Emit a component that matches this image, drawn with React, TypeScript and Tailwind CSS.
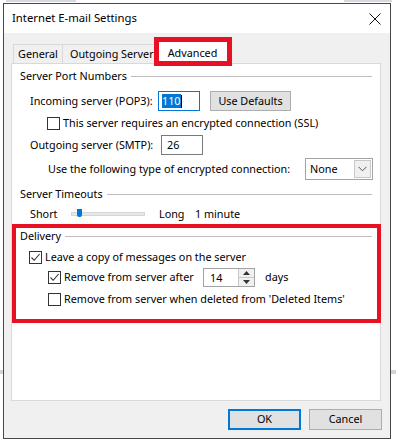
import React from 'react';

// Windows-style "Internet E-mail Settings" dialog, Advanced tab

const Check: React.FC<{ checked?: boolean }> = ({ checked }) => (
  <span className="flex w-[13px] h-[13px] shrink-0 items-center justify-center border border-[#333333] bg-white">
    {checked && (
      <svg width="11" height="11" viewBox="0 0 11 11">
        <path d="M1.5 5.5 L4.2 8.3 L9.6 2" fill="none" stroke="#333333" strokeWidth="1.1" />
      </svg>
    )}
  </span>
);

const GroupHeading: React.FC<{ label: string }> = ({ label }) => (
  <div className="flex h-[16px] items-center pl-[8px] pr-[8px]">
    <span>{label}</span>
    <span className="ml-[4px] h-px flex-1 bg-[#bdbdbd]" />
  </div>
);

const App: React.FC = () => {
  return (
    <div className="relative w-[396px] h-[439px] overflow-hidden bg-white pl-[3px] pt-[3px] font-['Noto_Sans',sans-serif] text-[10.8px] text-black">
      {/* edges of the window behind the dialog */}
      <div className="absolute left-[6px] top-0 h-[2px] w-[70px] bg-[#d8d8e0]" />
      <div className="absolute right-[4px] top-0 h-[2px] w-[48px] bg-[#d8d8e0]" />
      <div className="absolute left-0 top-[370px] h-[4px] w-[3px] bg-[#d4d4d4]" />
      <div className="absolute right-0 top-[370px] h-[4px] w-[5px] bg-[#d4d4d4]" />

      <div className="relative flex h-[436px] w-[388px] flex-col border border-[#474747] bg-[#f0f0f0]">
        {/* title bar */}
        <div className="flex h-[29px] items-center justify-between bg-white pl-[8px] pr-[9px]">
          <span className="text-[11.3px]">Internet E-mail Settings</span>
          <svg width="12" height="12" viewBox="0 0 12 12">
            <path d="M0.5 0.5 L11.5 11.5 M11.5 0.5 L0.5 11.5" stroke="#111111" strokeWidth="1" />
          </svg>
        </div>

        <div className="px-[7px] pt-[7px]">
          {/* tabs */}
          <div className="flex h-[23px] items-end pl-[2px]">
            <div className="flex h-[19px] w-[50px] items-center justify-center border border-b-0 border-[#d9d9d9]">General</div>
            <div className="flex h-[19px] w-[94px] items-center overflow-hidden whitespace-nowrap border-t border-[#d9d9d9] pl-[7px]">Outgoing Server</div>
            <div className="relative z-10 -mb-px flex h-[24px] w-[71px] items-center justify-center border border-b-0 border-[#d9d9d9] bg-white pt-[1px]">
              Advanced
              <span className="absolute left-[-4px] top-[-4px] h-[29px] w-[78px] border-[5px] border-[#e81123]" />
            </div>
          </div>

          {/* tab panel */}
          <div className="relative h-[338px] w-[370px] border border-[#d9d9d9] bg-white">
            <div className="mt-[4px]">
              <GroupHeading label="Server Port Numbers" />
            </div>

            <div className="mt-[7px] flex h-[20px] items-center pl-[18px]">
              <span className="w-[128px]">Incoming server (POP3):</span>
              <div className="flex h-[20px] w-[42px] items-center border border-[#0078d7] pl-[3px]">
                <span className="bg-[#0078d7] leading-[14px] text-white">110</span>
                <span className="h-[13px] w-px bg-black" />
              </div>
              <button className="ml-[10px] h-[20px] w-[81px] border border-[#adadad] bg-[#e1e1e1]">Use Defaults</button>
            </div>

            <div className="mt-[4px] flex h-[16px] items-center gap-[3px] pl-[35px]">
              <Check />
              <span>This server requires an encrypted connection (SSL)</span>
            </div>

            <div className="mt-[4px] flex h-[20px] items-center pl-[18px]">
              <span className="w-[131px]">Outgoing server (SMTP):</span>
              <div className="flex h-[20px] w-[42px] items-center border border-[#7a7a7a] pl-[5px]">26</div>
            </div>

            <div className="mt-[3px] flex h-[22px] items-center pl-[36px] pr-[7px]">
              <span>Use the following type of encrypted connection:</span>
              <div className="ml-auto flex h-[22px] w-[68px] items-center border border-[#a3a3a3] pl-[4px] pr-[1px]">
                <span className="flex-1">None</span>
                <span className="flex h-[18px] w-[17px] items-center justify-center border border-[#c8c8c8] bg-[#f0f0f0]">
                  <svg width="9" height="6" viewBox="0 0 9 6">
                    <path d="M0.5 0.8 L4.5 4.8 L8.5 0.8" fill="none" stroke="#555555" strokeWidth="1" />
                  </svg>
                </span>
              </div>
            </div>

            <div className="mt-[6px]">
              <GroupHeading label="Server Timeouts" />
            </div>

            <div className="mt-[4px] flex h-[16px] items-center pl-[18px]">
              <span className="w-[41px]">Short</span>
              <div className="relative h-[4px] w-[74px] border border-[#d6d6d6] bg-[#e7e7e7]">
                <span className="absolute left-[5px] top-[-4px] h-[8px] w-[5px] rounded-b-[2px] bg-[#0078d7]" />
              </div>
              <span className="ml-[14px] w-[36px]">Long</span>
              <span>1 minute</span>
            </div>

            <div className="mt-[6px]">
              <GroupHeading label="Delivery" />
            </div>

            <div className="mt-[5px] flex h-[16px] items-center gap-[3px] pl-[17px]">
              <Check checked />
              <span>Leave a copy of messages on the server</span>
            </div>

            <div className="mt-[2px] flex h-[20px] items-center pl-[36px]">
              <Check checked />
              <span className="ml-[3px] w-[139px]">Remove from server after</span>
              <div className="flex h-[19px] w-[52px] items-center border border-[#a3a3a3]">
                <span className="flex-1 pl-[6px] pt-[2px]">14</span>
                <span className="flex h-[17px] w-[16px] flex-col border-l border-[#c8c8c8] bg-[#f0f0f0]">
                  <span className="flex flex-1 items-center justify-center border-b border-[#c8c8c8]">
                    <svg width="7" height="4" viewBox="0 0 7 4"><path d="M0 4 L3.5 0 L7 4 Z" fill="#333333" /></svg>
                  </span>
                  <span className="flex flex-1 items-center justify-center">
                    <svg width="7" height="4" viewBox="0 0 7 4"><path d="M0 0 L3.5 4 L7 0 Z" fill="#333333" /></svg>
                  </span>
                </span>
              </div>
              <span className="ml-[10px]">days</span>
            </div>

            <div className="mt-[4px] flex h-[16px] items-center gap-[3px] pl-[36px]">
              <Check />
              <span>Remove from server when deleted from 'Deleted Items'</span>
            </div>

            {/* annotation box */}
            <span className="absolute left-0 top-[160px] h-[99px] w-[369px] border-4 border-[#e81123]" />
          </div>

          {/* buttons */}
          <div className="mt-[8px] flex justify-end gap-[8px] pr-px">
            <button className="h-[21px] w-[73px] border-2 border-[#0078d7] bg-[#e1e1e1]">OK</button>
            <button className="h-[21px] w-[73px] border border-[#adadad] bg-[#e1e1e1]">Cancel</button>
          </div>
        </div>
      </div>
    </div>
  );
};

export default App;
